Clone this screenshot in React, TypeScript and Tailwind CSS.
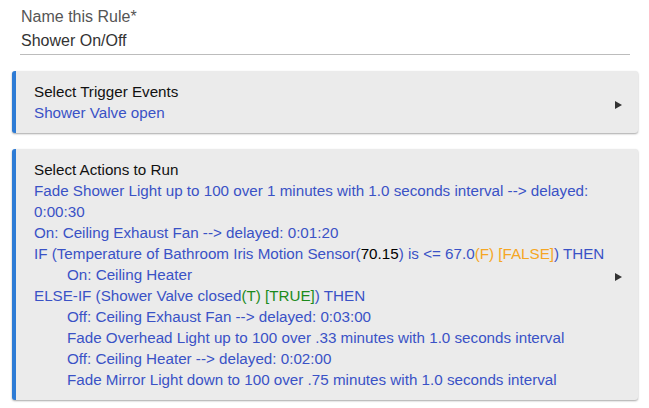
const BLUE = "text-[#3a52c6]";

function Arrow(): JSX.Element {
  return (
    <svg className="mt-[5px] h-[8px] w-[7px] shrink-0" viewBox="0 0 7 8">
      <path d="M0 0 L7 4 L0 8 Z" fill="#333" />
    </svg>
  );
}

function Card({ title, children }: { title: string; children: React.ReactNode }): JSX.Element {
  return (
    <div className="flex items-center rounded-[3px] border-l-[4px] border-[#2d7bd5] bg-[#ebebeb] py-[10px] pl-[18px] pr-[16px] text-[15.2px] shadow-[0_1px_2px_rgba(0,0,0,0.35)]">
      <div className="flex-1">
        <div className="text-[#111]">{title}</div>
        <div className={BLUE}>{children}</div>
      </div>
      <Arrow />
    </div>
  );
}

export default function App(): JSX.Element {
  return (
    <div className="h-[408px] w-[649px] bg-white font-['Liberation_Sans',Arial,sans-serif] text-[16px] leading-[21px]">
      <div className="mx-[20px] mr-[19px] border-b border-[#bcbcbc] pt-[6px] pb-[3px]">
        <div className="pl-px text-[#555]">Name this Rule*</div>
        <div className="mt-[3px] pl-px text-[#333]">Shower On/Off</div>
      </div>

      <div className="mx-[12px] mr-[11px] mt-[16px] space-y-[16px]">
        <Card title="Select Trigger Events">Shower Valve open</Card>

        <Card title="Select Actions to Run">
          <div className="pr-[10px]">
            Fade Shower Light up to 100 over 1 minutes with 1.0 seconds interval --&gt; delayed: 0:00:30
          </div>
          <div>On: Ceiling Exhaust Fan --&gt; delayed: 0:01:20</div>
          <div>
            IF (Temperature of Bathroom Iris Motion Sensor(<span className="text-black">70.15</span>) is &lt;= 67.0
            <span className="text-[#f5a623]">(F) [FALSE]</span>) THEN
          </div>
          <div className="pl-[33px]">On: Ceiling Heater</div>
          <div>
            ELSE-IF (Shower Valve closed<span className="text-[#1b8a1b]">(T) [TRUE]</span>) THEN
          </div>
          <div className="pl-[33px]">
            <div>Off: Ceiling Exhaust Fan --&gt; delayed: 0:03:00</div>
            <div>Fade Overhead Light up to 100 over .33 minutes with 1.0 seconds interval</div>
            <div>Off: Ceiling Heater --&gt; delayed: 0:02:00</div>
            <div>Fade Mirror Light down to 100 over .75 minutes with 1.0 seconds interval</div>
          </div>
        </Card>
      </div>
    </div>
  );
}
